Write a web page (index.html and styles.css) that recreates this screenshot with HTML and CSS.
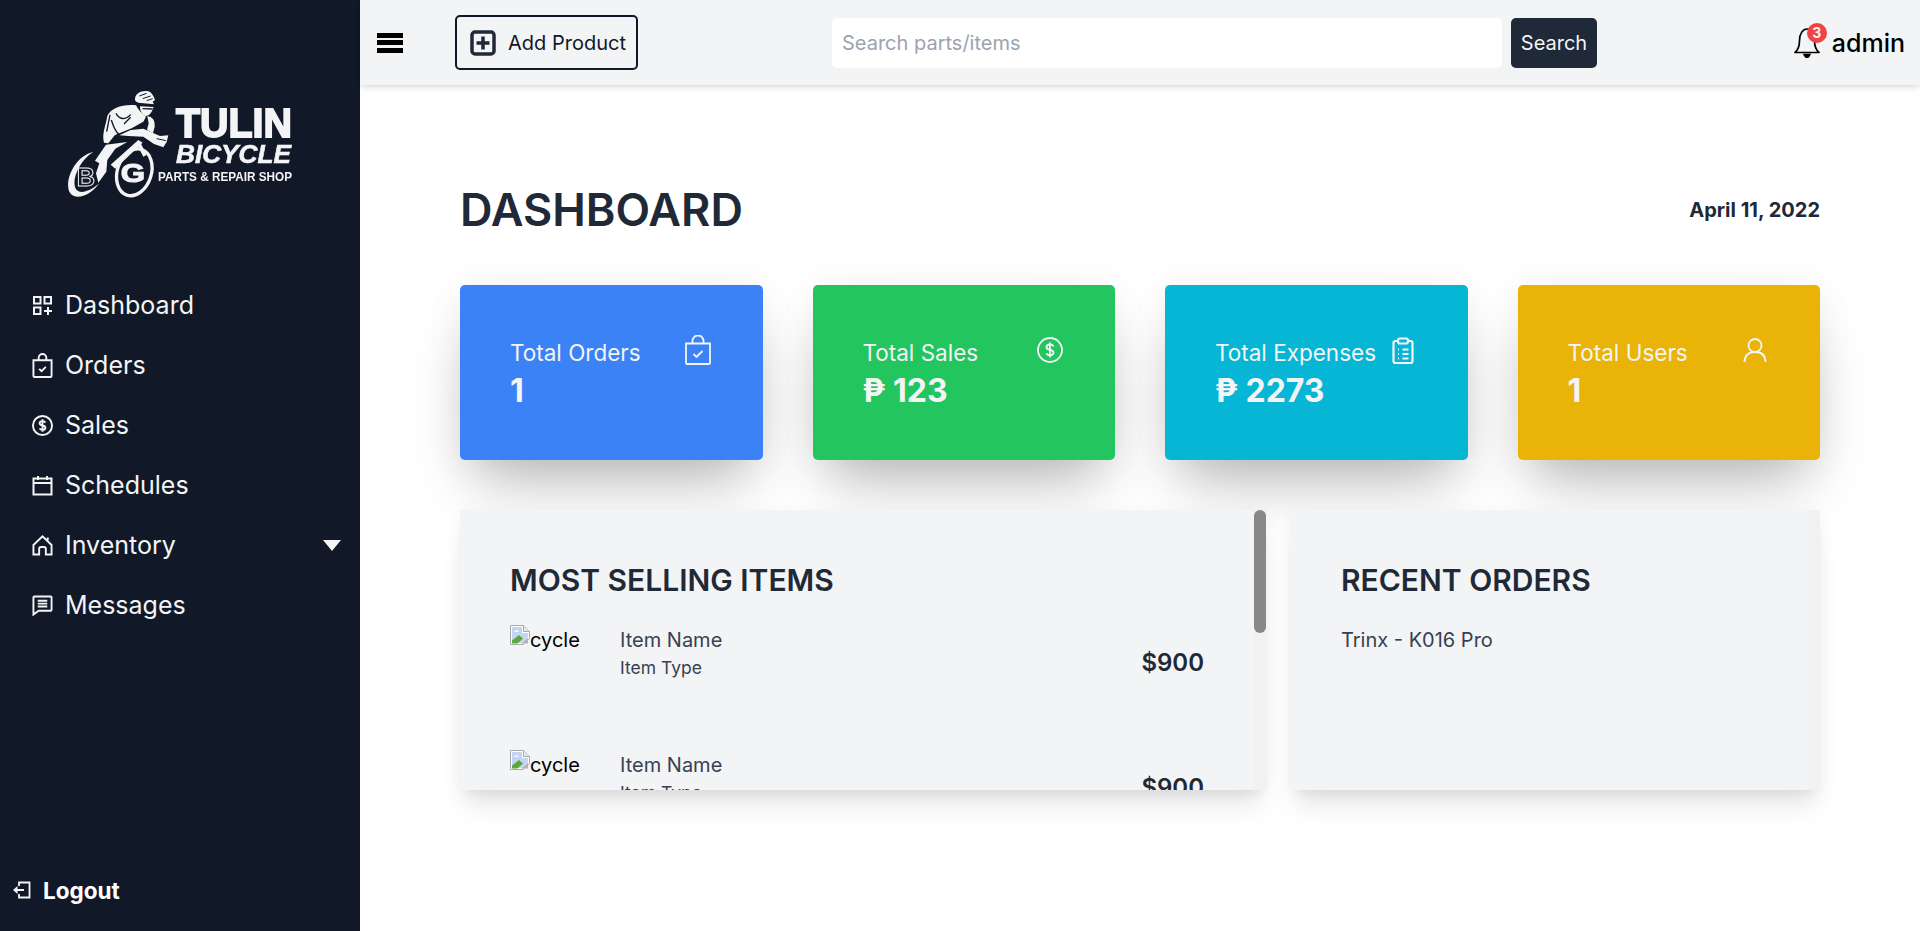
FILE: index.html
```html
<!DOCTYPE html>
<html lang="en">
<head>
<meta charset="UTF-8">
<title>Tulin Bicycle - Dashboard</title>
<link rel="stylesheet" href="styles.css">
</head>
<body>
<div class="app">
  <aside class="sidebar">
    <!-- logo -->
    <svg class="logo" viewBox="50 80 260 130" width="260" height="130">
      <g transform="scale(0.3333)" fill="#f3f4f6">
        <path d="M405 298C405 280 425 270 445 274 455 277 462 290 465 300L458 305 462 313 415 308C408 306 405 303 405 298Z"/>
        <path d="M418 288 440 280M428 296 452 288M440 302 458 296" fill="none" stroke="#111827" stroke-width="3"/>
        <path d="M420 319 461 321C456 336 448 349 436 348 426 344 420 333 420 319Z"/>
        <path d="M428 326 458 327" fill="none" stroke="#111827" stroke-width="4"/>
        <path d="M322 348C335 322 370 312 408 316 415 330 425 340 438 350L430 365 395 385 345 405 325 430 312 428C305 400 318 375 322 348Z"/>
        <path d="M348 340C358 358 376 362 392 344M334 360C342 385 348 398 358 404M372 372 392 352M330 345 320 395" fill="none" stroke="#111827" stroke-width="4"/>
        <path d="M442 348C456 350 466 360 464 380L459 400 441 390 446 370Z"/>
        <path d="M358 406 392 390 430 386 480 408 505 406 500 426 490 442 462 432 430 410 385 408Z"/>
        <path d="M470 416 498 422" fill="none" stroke="#111827" stroke-width="3"/>
        <path d="M318 434 382 426 346 446 322 480 319 515 295 548 288 520 298 490 285 482Z"/>
        <path d="M332 494 415 420 428 428 346 506Z"/>
        <path d="M420 425 440 465 430 470 410 432Z"/>
        <path d="M280 456C225 468 193 540 208 575 222 602 268 592 298 550 265 578 236 584 226 564 215 535 240 480 280 456Z"/>
        <ellipse cx="403" cy="517" rx="51" ry="72" transform="rotate(18 403 517)" fill="none" stroke="#f3f4f6" stroke-width="10"/>
        <text class="logo-bg logo-b" x="230" y="558">B</text>
        <text class="logo-bg" x="362" y="545" textLength="73" lengthAdjust="spacingAndGlyphs">G</text>
      </g>
      <text class="logo-tulin" x="176" y="137" textLength="116" lengthAdjust="spacingAndGlyphs">TULIN</text>
      <text class="logo-bicycle" x="176" y="163" textLength="115" lengthAdjust="spacingAndGlyphs">BICYCLE</text>
      <text class="logo-shop" x="158" y="181" textLength="134" lengthAdjust="spacingAndGlyphs">PARTS &amp; REPAIR SHOP</text>
    </svg>

    <nav class="nav">
      <a class="nav-item">
        <svg class="nav-icon" viewBox="0 0 21 21"><path d="M2 2h6.500v6.500H2zM12.500 2H19v6.500h-6.500zM2 12.500h6.500V19H2zM16 12v8M12 16h8"/></svg>
        Dashboard
      </a>
      <a class="nav-item">
        <svg class="nav-icon nav-icon-tall" viewBox="0 0 22 26"><path d="M1.500 7.500h19V24a1 1 0 0 1-1 1h-17a1 1 0 0 1-1-1zM7 7.500V5a4 4 0 0 1 8 0v2.500M7.500 16.500l2.500 2.500 4.500-4.500"/></svg>
        Orders
      </a>
      <a class="nav-item">
        <svg class="nav-icon" viewBox="0 0 22 22"><circle cx="11" cy="11" r="10"/><path d="M14 8c-.5-1.200-1.600-1.600-3-1.600-1.700 0-3 .8-3 2.300s1.300 2 3 2.300 3 .8 3 2.300-1.300 2.300-3 2.300c-1.400 0-2.500-.4-3-1.600M11 4.500v13"/></svg>
        Sales
      </a>
      <a class="nav-item">
        <svg class="nav-icon" viewBox="0 0 21 21"><path d="M1.500 3.500h18v16h-18zM1.500 8h18M6 1v4M15 1v4"/></svg>
        Schedules
      </a>
      <a class="nav-item">
        <svg class="nav-icon" viewBox="0 0 22 22"><path d="M1.500 10.500 11 1.500l9.500 9V20.500h-6v-6a2 2 0 0 0-2-2h-3a2 2 0 0 0-2 2v6h-6zM16.500 2.500v3"/></svg>
        Inventory
        <span class="nav-caret"></span>
      </a>
      <a class="nav-item">
        <svg class="nav-icon" viewBox="0 0 22 22"><path d="M2.500 1.500h17a1 1 0 0 1 1 1v13a1 1 0 0 1-1 1H7l-5.500 4V2.500a1 1 0 0 1 1-1zM6 6h10M6 9h10M6 12h10"/></svg>
        Messages
      </a>
    </nav>

    <a class="logout">
      <svg class="logout-icon" viewBox="0 0 19 18"><path d="M7 5V1.500h10.500v15H7V13M12 9H3"/><path class="logout-arrow" d="M1 9l4.500-4v8z"/></svg>
      Logout
    </a>
  </aside>

  <div class="content">
    <header class="topbar">
      <div class="burger"><span></span><span></span><span></span></div>
      <button class="add-btn">
        <svg class="add-icon" viewBox="0 0 26 26"><rect x="2" y="2" width="22" height="22" rx="3"/><path d="M13 6.500v13M6.500 13h13"/></svg>
        Add Product
      </button>
      <form class="search">
        <input class="search-input" type="text" placeholder="Search parts/items">
        <button class="search-btn" type="button">Search</button>
      </form>
      <div class="user">
        <div class="bell">
          <svg viewBox="0 0 26 30"><path d="M1 24.500c3-2.500 4.500-7 4.500-12C5.500 5.500 9 1 13 1s7.500 4.500 7.500 11.500c0 5 1.500 9.500 4.500 12z" fill="none" stroke="#000" stroke-width="1.700" stroke-linejoin="round"/><path d="M8.700 25.700h8.600l-2 3.300a2.800 2.800 0 0 1-4.600 0z" fill="#000"/></svg>
          <span class="badge">3</span>
        </div>
        <span class="username">admin</span>
      </div>
    </header>

    <main class="main">
      <div class="title-row">
        <h1 class="title">DASHBOARD</h1>
        <span class="date">April 11, 2022</span>
      </div>

      <section class="cards">
        <div class="card card-blue">
          <div><p class="card-label">Total Orders</p><p class="card-value">1</p></div>
          <svg class="card-icon" viewBox="0 0 30 30"><path d="M3 8.500h24V28a1 1 0 0 1-1 1H4a1 1 0 0 1-1-1zM9.500 8.500V6a5.500 5.500 0 0 1 11 0v2.500M10.500 19l3 3 6-6"/></svg>
        </div>
        <div class="card card-green">
          <div><p class="card-label">Total Sales</p><p class="card-value">₱ 123</p></div>
          <svg class="card-icon" viewBox="0 0 30 30"><circle cx="15" cy="15" r="12"/><path d="M18.500 11.500c-.5-1.300-1.800-2-3.500-2-2 0-3.500 1-3.500 2.700s1.500 2.300 3.500 2.700 3.500 1 3.500 2.700-1.500 2.700-3.500 2.700c-1.700 0-3-.7-3.500-2M15 7.500v15"/></svg>
        </div>
        <div class="card card-cyan">
          <div><p class="card-label">Total Expenses</p><p class="card-value">₱ 2273</p></div>
          <svg class="card-icon card-icon-heavy" viewBox="0 0 30 30"><path d="M10 6H7.500a2 2 0 0 0-2 2v18a2 2 0 0 0 2 2h15a2 2 0 0 0 2-2V8a2 2 0 0 0-2-2H20M10 5.500a2 2 0 0 1 2-2h6a2 2 0 0 1 2 2v1a2 2 0 0 1-2 2h-6a2 2 0 0 1-2-2zM10 14.500h1M14.500 14.500h6M10 19h1M14.500 19h6M10 23.500h1M14.500 23.500h6"/></svg>
        </div>
        <div class="card card-yellow">
          <div><p class="card-label">Total Users</p><p class="card-value">1</p></div>
          <svg class="card-icon" viewBox="0 0 30 30"><circle cx="15" cy="10.500" r="6.500"/><path d="M4.500 27c0-6 3.500-10 10.500-10s10.500 4 10.500 10"/></svg>
        </div>
      </section>

      <section class="panels">
        <div class="panel">
          <h2 class="panel-title">MOST SELLING ITEMS</h2>
          <div class="item">
            <div class="item-pic">
              <svg class="broken" viewBox="0 0 20 20"><path d="M.5.500h13l6 6v7L13 19.500H.5z" fill="#fff" stroke="#a9a9a9"/><path d="M13.500.500v6h6" fill="#e8e8e8" stroke="#a9a9a9"/><path d="M2 2h10v6h6v4l-7 6H2z" fill="#c3d4f5"/><path d="M2 18.500v-3L9 10l4 3.500-5.500 5z" fill="#5ba83e"/><path d="M11 18.500l7-6v6z" fill="#b5b5b5"/><path d="M4 7c1-2 4-2 5 0z" fill="#fff"/></svg>
              <span>cycle</span>
            </div>
            <div class="item-info"><p class="item-name">Item Name</p><p class="item-type">Item Type</p></div>
            <p class="item-price">$900</p>
          </div>
          <div class="item">
            <div class="item-pic">
              <svg class="broken" viewBox="0 0 20 20"><path d="M.5.500h13l6 6v7L13 19.500H.5z" fill="#fff" stroke="#a9a9a9"/><path d="M13.500.500v6h6" fill="#e8e8e8" stroke="#a9a9a9"/><path d="M2 2h10v6h6v4l-7 6H2z" fill="#c3d4f5"/><path d="M2 18.500v-3L9 10l4 3.500-5.500 5z" fill="#5ba83e"/><path d="M11 18.500l7-6v6z" fill="#b5b5b5"/><path d="M4 7c1-2 4-2 5 0z" fill="#fff"/></svg>
              <span>cycle</span>
            </div>
            <div class="item-info"><p class="item-name">Item Name</p><p class="item-type">Item Type</p></div>
            <p class="item-price">$900</p>
          </div>
          <div class="scrollbar"><div class="scrollbar-thumb"></div></div>
        </div>
        <div class="panel">
          <h2 class="panel-title">RECENT ORDERS</h2>
          <p class="order">Trinx - K016 Pro</p>
          <div class="scrollbar"></div>
        </div>
      </section>
    </main>
  </div>
</div>
</body>
</html>
```

FILE: styles.css
```css
* { box-sizing: border-box; }
html, body { margin: 0; height: 100%; overflow: hidden; }
body { font-family: Inter, "Liberation Sans", sans-serif; background: #fff; color: #1f2937; }
p, h1, h2 { margin: 0; }

.app { display: flex; height: 931px; }

/* sidebar */
.sidebar { width: 360px; flex: none; display: flex; flex-direction: column; background: #111827; color: #f3f4f6; }
.logo { display: block; margin: 80px 0 0 50px; flex: none; filter: blur(.3px); }
.logo text { fill: #f3f4f6; font-family: "Liberation Sans", sans-serif; font-weight: 700; }
.logo-tulin { font-size: 41px; stroke: #f3f4f6; stroke-width: 1.800px; }
.logo-bicycle { font-size: 25px; font-style: italic; stroke: #f3f4f6; stroke-width: .6px; }
.logo-shop { font-size: 12.500px; }
.logo .logo-bg { font-size: 76px; stroke: #f3f4f6; stroke-width: 3px; }
.logo .logo-b { fill: #111827; }

.nav { margin-top: 65px; }
.nav-item { display: flex; align-items: center; height: 60px; padding: 0 19px 0 32px; font-size: 25px; color: #f3f4f6; }
.nav-icon { width: 21px; height: 21px; margin-right: 12px; flex: none; fill: none; stroke: #f3f4f6; stroke-width: 2; }
.nav-icon-tall { height: 25px; }
.nav-caret { margin-left: auto; border-top: 11px solid #f3f4f6; border-left: 9px solid transparent; border-right: 9px solid transparent; }

.logout { display: flex; align-items: center; margin-top: auto; height: 40px; margin-bottom: 21px; padding-left: 12px; font-size: 22.500px; font-weight: 700; color: #fff; }
.logout-icon { width: 19px; height: 18px; margin-right: 12px; fill: none; stroke: #f3f4f6; stroke-width: 1.800; }
.logout-arrow { fill: #f3f4f6; stroke: none; }

/* top bar */
.content { flex: 1; min-width: 0; display: flex; flex-direction: column; }
.topbar { position: relative; z-index: 2; display: flex; align-items: center; height: 85px; padding: 0 15px 0 17px; background: #f3f4f6; box-shadow: 0 4px 6px -1px rgba(0,0,0,.1), 0 2px 4px -1px rgba(0,0,0,.06); }
.burger { width: 26px; display: flex; flex-direction: column; gap: 2.500px; }
.burger span { display: block; height: 5px; background: #000; }
.add-btn { display: flex; align-items: center; width: 183px; height: 55px; margin-left: 52px; padding: 0 0 0 13px; background: transparent; border: 2px solid #111827; border-radius: 5px; font: 400 20px Inter, sans-serif; color: #111827; }
.add-icon { width: 26px; height: 26px; margin-right: 12px; fill: none; stroke: #1f2937; stroke-width: 3.500; }
.search { display: flex; margin-left: 194px; }
.search-input { width: 670px; height: 50px; padding: 0 10px; border: 0; border-radius: 5px; background: #fff; font: 400 20px Inter, sans-serif; }
.search-input::placeholder { color: #9ca3af; opacity: 1; }
.search-btn { width: 86px; height: 50px; margin-left: 9px; border: 0; border-radius: 5px; background: #1f2937; color: #f3f4f6; font: 400 20px Inter, sans-serif; }
.user { display: flex; align-items: center; margin-left: auto; }
.bell { position: relative; width: 26px; height: 30px; margin-right: 12px; }
.bell svg { display: block; width: 26px; height: 30px; }
.badge { position: absolute; top: -5px; left: 13px; width: 20px; height: 20px; border-radius: 50%; background: #ef4444; color: #f3f4f6; font-size: 14px; font-weight: 700; line-height: 20px; text-align: center; }
.username { font-size: 25px; font-weight: 500; color: #000; }

/* main */
.main { padding: 100px 100px 0; }
.title-row { display: flex; align-items: center; justify-content: space-between; height: 50px; }
.title { font-size: 45px; font-weight: 600; line-height: 50px; color: #1f2937; }
.date { font-size: 20px; font-weight: 700; color: #1f2937; }

.cards { display: grid; grid-template-columns: repeat(4, 1fr); gap: 50px; margin-top: 50px; }
.card { display: flex; justify-content: space-between; align-items: flex-start; height: 175px; padding: 50px; border-radius: 5px; color: #f3f4f6; box-shadow: 0 35px 60px -15px rgba(0,0,0,.28), 0 0 40px rgba(0,0,0,.05); }
.card-blue { background: #3b82f6; }
.card-green { background: #22c55e; }
.card-cyan { background: #06b6d4; }
.card-yellow { background: #eab308; }
.card-label { font-size: 22.500px; line-height: 36px; white-space: nowrap; }
.card-value { font-size: 32px; font-weight: 700; line-height: 40px; white-space: nowrap; }
.card-icon { width: 30px; height: 30px; flex: none; fill: none; stroke: #f3f4f6; stroke-width: 1.800; }
.card-icon-heavy { stroke-width: 2.200; }

.panels { display: grid; grid-template-columns: 806px 1fr; gap: 25px; margin-top: 50px; }
.panel { position: relative; height: 280px; padding: 50px 62px 0 50px; overflow: hidden; background: #f3f4f6; box-shadow: 0 20px 25px -5px rgba(0,0,0,.1), 0 10px 10px -5px rgba(0,0,0,.04), 0 0 15px rgba(0,0,0,.03); }
.scrollbar { position: absolute; top: 0; right: 0; bottom: 0; width: 12px; background: #f1f1f1; }
.scrollbar-thumb { height: 123px; background: #888; border-radius: 6px; }
.panel-title { font-size: 30px; font-weight: 600; line-height: 40px; color: #1f2937; }

.item { display: flex; align-items: flex-end; height: 125px; padding-bottom: 69px; }
.panel-title + .item { margin-top: 25px; }
.item-pic { display: flex; align-items: flex-start; width: 110px; height: 56px; font-size: 20px; line-height: 30px; color: #000; }
.broken { display: block; width: 20px; height: 20px; flex: none; }
.item-info { flex: 1; }
.item-name { font-size: 20px; line-height: 30px; color: #374151; }
.item-type { font-size: 17.500px; line-height: 26px; color: #374151; }
.item-price { font-size: 24px; font-weight: 600; line-height: 36px; color: #1f2937; }
.order { margin-top: 25px; font-size: 20px; line-height: 30px; color: #374151; }
```
